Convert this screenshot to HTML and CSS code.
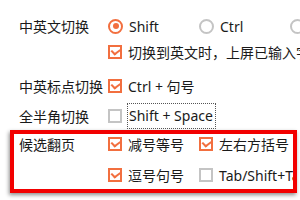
FILE: index.html
```html
<!DOCTYPE html>
<html lang="zh-CN">
  <head>
    <meta charset="UTF-8" />
    <title>按键设置</title>
    <link rel="stylesheet" href="styles.css">
  </head>
  <body>
    <div class="settings">
      <div class="row first">
        <div class="label">中英文切换</div>
        <div class="options">
          <div class="option"><span class="radio on"></span>Shift</div>
          <div class="option"><span class="radio"></span>Ctrl</div>
          <div class="option"><span class="radio"></span>CapsLock</div>
        </div>
      </div>
      <div class="row">
        <div class="label"></div>
        <div class="options">
          <div class="option"><span class="check on"></span>切换到英文时，上屏已输入字符</div>
        </div>
      </div>
      <div class="row group">
        <div class="label">中英标点切换</div>
        <div class="options">
          <div class="option"><span class="check on"></span>Ctrl + 句号</div>
        </div>
      </div>
      <div class="row near">
        <div class="label">全半角切换</div>
        <div class="options">
          <div class="option"><span class="check"></span><span class="focus">Shift + Space</span></div>
        </div>
      </div>

      <div class="highlight">
        <div class="row tight">
          <div class="label">候选翻页</div>
          <div class="options">
            <div class="option"><span class="check on"></span>减号等号</div>
            <div class="option"><span class="check on"></span>左右方括号</div>
          </div>
        </div>
        <div class="row tight second">
          <div class="label"></div>
          <div class="options">
            <div class="option"><span class="check on"></span>逗号句号</div>
            <div class="option"><span class="check"></span>Tab/Shift+Tab</div>
          </div>
        </div>
      </div>
    </div>
  </body>
</html>
```

FILE: styles.css
```css
body {
  margin: 0;
  background-color: #fff;
  color: #1a1a1a;
  font-family: "Noto Sans", "Noto Sans CJK SC", sans-serif;
  font-size: 14px;
  overflow: hidden;
  width: 300px;
  height: 200px;
}
.settings {
  padding-top: 13px;
}
.row {
  display: flex;
  align-items: center;
  height: 26px;
  padding-left: 19px;
  white-space: nowrap;
}
.row.group {
  margin-top: 8px;
}
.row.near {
  margin-top: 4px;
}
.label {
  width: 89px;
  flex-shrink: 0;
}
.options {
  display: flex;
  align-items: center;
}
.option {
  display: flex;
  align-items: center;
  width: 91px;
  flex-shrink: 0;
}
.radio {
  box-sizing: border-box;
  width: 15px;
  height: 15px;
  margin-right: 6px;
  border: 2px solid #c4c4c4;
  border-radius: 50%;
  position: relative;
}
.radio.on {
  border-color: #f26f3f;
}
.radio.on::after {
  content: "";
  position: absolute;
  left: 2.5px;
  top: 2.5px;
  width: 6px;
  height: 6px;
  border-radius: 50%;
  background-color: #f26f3f;
}
.check {
  box-sizing: border-box;
  width: 14px;
  height: 14px;
  margin-right: 6px;
  border: 2px solid #c4c4c4;
  position: relative;
  flex-shrink: 0;
}
.check.on {
  border-color: #f26f3f;
}
.check.on::after {
  content: "";
  position: absolute;
  left: 2px;
  top: 0px;
  width: 4px;
  height: 6px;
  border-right: 2px solid #f26f3f;
  border-bottom: 2px solid #f26f3f;
  transform: rotate(45deg) skewX(-8deg);
  transform-origin: 60% 60%;
}
.focus {
  border: 1px dotted #555;
  padding: 2px 2px 3px 1px;
  margin-left: -1px;
}
.highlight {
  margin: 1px 3px 0 10px;
  border: 4px solid #f20000;
  padding: 0 0 4px 5px;
  box-shadow: -1px 2px 4px rgba(0, 0, 0, 0.45);
  overflow: hidden;
}
.highlight .row {
  padding-left: 0;
}
.row.tight {
  height: 20px;
}
.row.second {
  margin-top: 11px;
}
```
